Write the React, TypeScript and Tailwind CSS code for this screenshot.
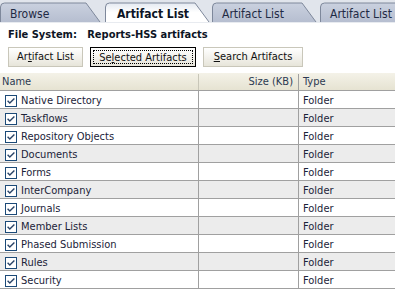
import React from 'react';

const rows = [
  'Native Directory',
  'Taskflows',
  'Repository Objects',
  'Documents',
  'Forms',
  'InterCompany',
  'Journals',
  'Member Lists',
  'Phased Submission',
  'Rules',
  'Security',
];

function TabShape({ active, width }: { active?: boolean; width: number }) {
  // decorative tab outline: rounded left, slanted right edge
  const h = 22;
  const d = `M0.5 ${h} L0.5 7 Q0.5 3 4.5 3 L${width - 15} 3 L${width - 1} ${h}`;
  return (
    <svg className="absolute inset-0" width={width} height={h + 1} viewBox={`0 0 ${width} ${h + 1}`}>
      <defs>
        <linearGradient id="tabActive" x1="0" y1="0" x2="0" y2="1">
          <stop offset="0" stopColor="#e4e9f1" />
          <stop offset="0.5" stopColor="#ffffff" />
          <stop offset="1" stopColor="#ffffff" />
        </linearGradient>
        <linearGradient id="tabIdle" x1="0" y1="0" x2="0" y2="1">
          <stop offset="0" stopColor="#cad1df" />
          <stop offset="1" stopColor="#b6bed0" />
        </linearGradient>
      </defs>
      <path d={d + ' Z'} fill={active ? 'url(#tabActive)' : 'url(#tabIdle)'} />
      <path d={d} fill="none" stroke="#7e889b" strokeWidth="1" />
    </svg>
  );
}

function Tab({ label, width, active, className }: { label: string; width: number; active?: boolean; className?: string }) {
  return (
    <div className={`relative h-[23px] shrink-0 ${className ?? ''}`} style={{ width }}>
      <TabShape active={active} width={width} />
      <span
        className={`relative block pt-[7px] text-[12px] leading-[14px] ${active ? 'pl-[12px] font-bold text-[#0c1424]' : 'pl-[10px] text-[#1f2a44]'}`}
      >
        {label}
      </span>
    </div>
  );
}

function CheckBox() {
  return (
    <svg width="12" height="12" viewBox="0 0 12 12" className="shrink-0">
      <rect x="0.5" y="0.5" width="11" height="11" fill="#ffffff" stroke="#1c4a78" />
      <path d="M2.6 5.8 L4.8 8 L9.4 3.4" fill="none" stroke="#2a4468" strokeWidth="1.4" />
    </svg>
  );
}

export default function App() {
  return (
    <div
      className="w-[395px] h-[289px] overflow-hidden bg-white text-[11px] text-[#1b2338]"
      style={{ fontFamily: 'Tahoma, "DejaVu Sans Condensed", "DejaVu Sans", sans-serif' }}
    >
      {/* tab strip */}
      <div className="flex h-[23px] border-b border-[#e8ebf0] bg-[#e1e5ec]">
        <Tab label="Browse" width={101} />
        <Tab label="Artifact List" width={105} active className="ml-[4px]" />
        <Tab label="Artifact List" width={105} className="ml-[2px]" />
        <Tab label="Artifact List" width={105} className="ml-[3px]" />
      </div>

      <div className="px-[8px] pt-[4px] text-[11px] font-bold text-[#0c1424] leading-[16px]">
        File System:&nbsp;&nbsp;&nbsp;Reports-HSS artifacts
      </div>

      {/* buttons */}
      <div className="flex gap-[7px] pl-[8px] pt-[4px]">
        <button className="h-[20px] w-[75px] border border-[#c9c7ba] bg-gradient-to-b from-white to-[#e7e5da] text-[11px] leading-[16px] text-[#111]">
          Ar<span className="underline">t</span>ifact List
        </button>
        <button className="h-[20px] w-[106px] border border-black bg-gradient-to-b from-white to-[#e7e5da] p-[2px] text-[11px] leading-[14px] text-[#111]">
          <span className="block h-full border border-dotted border-black">
            Se<span className="underline">l</span>ected Artifacts
          </span>
        </button>
        <button className="h-[20px] w-[100px] border border-[#c9c7ba] bg-gradient-to-b from-white to-[#e7e5da] text-[11px] leading-[16px] text-[#111]">
          <span className="underline">S</span>earch Artifacts
        </button>
      </div>

      {/* table */}
      <div className="mt-[6px]">
        <div className="flex h-[18px] border-b border-[#a0a0a0] bg-gradient-to-b from-[#f4f2e8] to-[#e6e3d2] pt-[1px] text-[11px] leading-[16px] text-[#2c3a52]">
          <div className="w-[199px] border-r border-[#c8c6b8] pl-[2px]">Name</div>
          <div className="w-[100px] border-r border-[#a0a0a0] pr-[5px] text-right">Size (KB)</div>
          <div className="flex-1 pl-[4px]">Type</div>
        </div>
        {rows.map((name, i) => (
          <div
            key={name}
            className={`flex h-[18px] border-b border-[#a0a0a0] text-[11px] leading-[17px] ${i % 2 === 1 ? 'bg-[#ececec]' : 'bg-white'}`}
          >
            <div className="flex w-[199px] items-center gap-[4px] border-r border-[#a0a0a0] pl-[5px] pt-[2px]">
              <CheckBox />
              <span className="leading-[15px]">{name}</span>
            </div>
            <div className="w-[100px] border-r border-[#a0a0a0]" />
            <div className="flex-1 pl-[4px] pt-[2px] leading-[15px]">Folder</div>
          </div>
        ))}
      </div>
    </div>
  );
}
